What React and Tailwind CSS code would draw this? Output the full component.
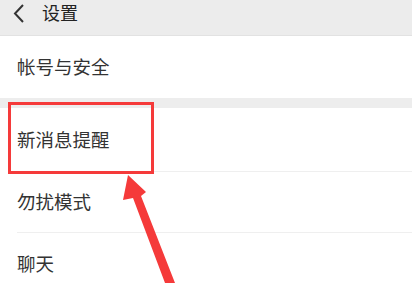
export default function App() {
  const font = { fontFamily: '"Noto Sans CJK SC", "Noto Sans", sans-serif' };
  return (
    <div className="relative w-[412px] h-[283px] overflow-hidden bg-white" style={font}>
      <div className="h-[36px] bg-[#ececec] border-b border-[#e2e2e2] flex items-start">
        <svg width="16" height="22" viewBox="0 0 16 22" className="ml-[11px] mt-[2px]">
          <path d="M12 3 L4 11.5 L12 20" fill="none" stroke="#333" strokeWidth="2" />
        </svg>
        <span className="ml-[15px] text-[18px] leading-[24px] text-[#222]">设置</span>
      </div>
      <div className="h-[62px] flex items-center pl-[17px] text-[18.5px] text-[#333]">帐号与安全</div>
      <div className="h-[10px] bg-[#ededed]" />
      <div className="h-[63px] flex items-center pl-[17px] text-[18.5px] text-[#333]">新消息提醒</div>
      <div className="ml-[17px] h-px bg-[#efefef]" />
      <div className="h-[60px] flex items-center pl-[17px] text-[18.5px] text-[#333]">勿扰模式</div>
      <div className="ml-[17px] h-px bg-[#efefef]" />
      <div className="h-[62px] flex items-center pl-[17px] text-[18.5px] text-[#333]">聊天</div>

      <div className="absolute left-[8px] top-[102px] w-[146px] h-[72px] border-[3px] border-[#f53a3a]" />
      <svg className="absolute left-0 top-0" width="412" height="283" viewBox="0 0 412 283">
        <polygon
          points="128,175 146,192 141,196 175,283 165,283 133,198 123,200"
          fill="#f53a3a"
        />
      </svg>
    </div>
  );
}
